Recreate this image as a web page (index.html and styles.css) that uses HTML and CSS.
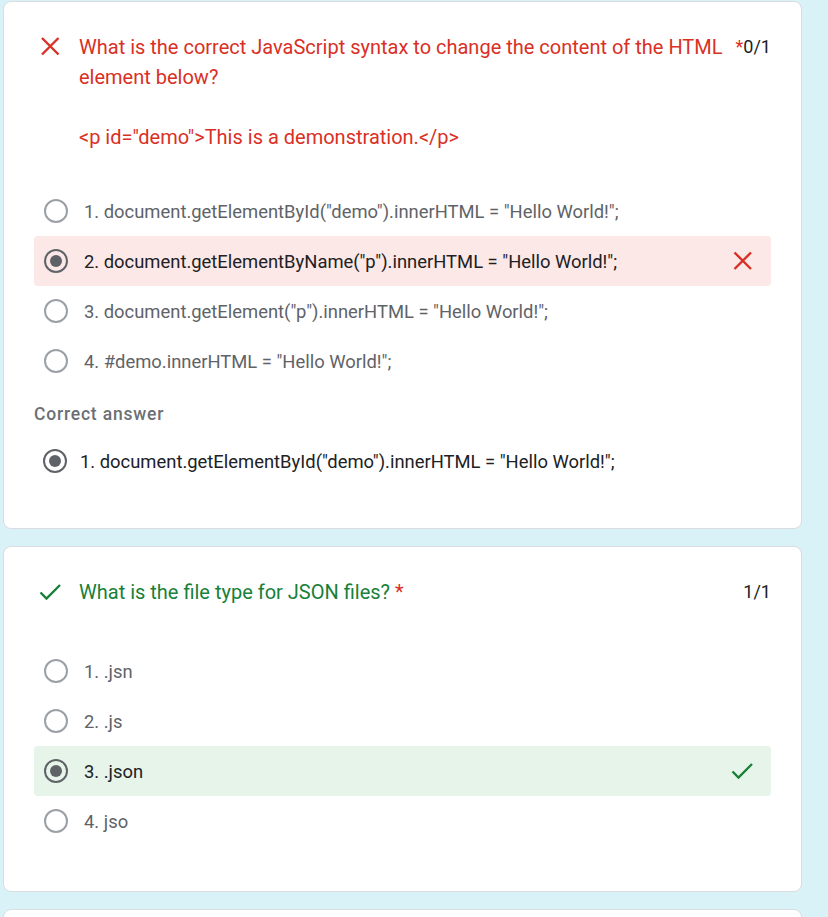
FILE: index.html
```html
<!DOCTYPE html>
<html>
<head>
<meta charset="utf-8">
<link rel="stylesheet" href="styles.css">
</head>
<body>
<div class="page">
  <section class="card card-wrong">
    <div class="q-head">
      <div class="q-icon">
        <svg width="24" height="24" viewBox="0 0 24 24"><path d="M3 3 L19.5 19.5 M19.5 3 L3 19.5" stroke="#d93025" stroke-width="2.4" fill="none"/></svg>
      </div>
      <div class="q-title red">What is the correct JavaScript syntax to change the content of the HTML element below?<br><br>&lt;p id="demo"&gt;This is a demonstration.&lt;/p&gt;</div>
      <div class="q-score"><span class="req">*</span>0/1</div>
    </div>
    <div class="options first-options">
      <div class="opt"><span class="radio"></span><span class="opt-text">1. document.getElementById("demo").innerHTML = "Hello World!";</span></div>
      <div class="opt opt-wrong"><span class="radio checked"></span><span class="opt-text">2. document.getElementByName("p").innerHTML = "Hello World!";</span>
        <svg class="mark" width="24" height="24" viewBox="0 0 24 24"><path d="M3.5 3.5 L20 20 M20 3.5 L3.5 20" stroke="#d93025" stroke-width="2.4" fill="none"/></svg>
      </div>
      <div class="opt"><span class="radio"></span><span class="opt-text">3. document.getElement("p").innerHTML = "Hello World!";</span></div>
      <div class="opt"><span class="radio"></span><span class="opt-text">4. #demo.innerHTML = "Hello World!";</span></div>
    </div>
    <div class="correct-label">Correct answer</div>
    <div class="correct-opt"><span class="radio checked"></span><span class="opt-text sel">1. document.getElementById("demo").innerHTML = "Hello World!";</span></div>
  </section>

  <section class="card card-right">
    <div class="q-head">
      <div class="q-icon">
        <svg width="24" height="24" viewBox="0 0 24 24"><path d="M1.5 12.5 L7.5 18.5 L21 5" stroke="#188038" stroke-width="2.4" fill="none"/></svg>
      </div>
      <div class="q-title green">What is the file type for JSON files? <span class="req">*</span></div>
      <div class="q-score">1/1</div>
    </div>
    <div class="options second-options">
      <div class="opt"><span class="radio"></span><span class="opt-text">1. .jsn</span></div>
      <div class="opt"><span class="radio"></span><span class="opt-text">2. .js</span></div>
      <div class="opt opt-right"><span class="radio checked"></span><span class="opt-text">3. .json</span>
        <svg class="mark" width="24" height="24" viewBox="0 0 24 24"><path d="M1.5 12.5 L7.5 18.5 L21 5" stroke="#188038" stroke-width="2.4" fill="none"/></svg>
      </div>
      <div class="opt"><span class="radio"></span><span class="opt-text">4. jso</span></div>
    </div>
  </section>

  <section class="card card-next"></section>
</div>
</body>
</html>
```

FILE: styles.css
```css
html, body {
  margin: 0;
  padding: 0;
  background: #d9f2f8;
}
body {
  font-family: Roboto, "Liberation Sans", Arial, sans-serif;
  color: #202124;
  overflow: hidden;
}
.page {
  padding: 1px 26px 0 3px;
  display: flex;
  flex-direction: column;
  gap: 17px;
}
.card {
  background: #fff;
  border: 1px solid #dadce0;
  border-radius: 8px;
  padding: 30px 30px 42px 30px;
}
.card-right {
  padding-bottom: 45px;
}
.card-next {
  height: 40px;
  padding: 0;
}
.q-head {
  display: flex;
  align-items: flex-start;
}
.q-icon {
  width: 45px;
  flex: none;
  padding-top: 3px;
  padding-left: 5px;
  box-sizing: border-box;
  height: 30px;
}
.q-icon svg { display: block; }
.q-title {
  flex: 1;
  font-size: 20px;
  line-height: 30px;
}
.red { color: #d93025; }
.green { color: #188038; }
.req { color: #d93025; }
.q-score {
  font-size: 18px;
  line-height: 30px;
  color: #202124;
  margin-left: 8px;
  flex: none;
}
.options {
  display: flex;
  flex-direction: column;
}
.first-options { margin-top: 34px; }
.second-options { margin-top: 39px; }
.opt {
  height: 50px;
  display: flex;
  align-items: center;
  padding: 0 16px 0 10px;
  border-radius: 4px;
}
.opt-wrong { background: #fce8e6; }
.opt-right { background: #e6f4ea; }
.radio {
  width: 20px;
  height: 20px;
  border: 2px solid #9aa0a6;
  border-radius: 50%;
  flex: none;
  position: relative;
  box-sizing: content-box;
}
.radio.checked {
  border-color: #5f6368;
}
.radio.checked::after {
  content: "";
  position: absolute;
  left: 4px;
  top: 4px;
  width: 12px;
  height: 12px;
  border-radius: 50%;
  background: #5f6368;
}
.opt-text {
  margin-left: 16px;
  font-size: 18.4px;
  color: #5f6368;
  flex: 1;
}
.opt-wrong .opt-text, .opt-right .opt-text, .opt-text.sel {
  color: #202124;
}
.mark { flex: none; display: block; }
.correct-label {
  margin-top: 16px;
  font-family: Roboto, "Open Sans", sans-serif;
  font-weight: 500;
  font-size: 17.5px;
  letter-spacing: 0.8px;
  line-height: 24px;
  color: #6b6f74;
}
.correct-opt {
  margin-top: 10px;
  height: 50px;
  display: flex;
  align-items: center;
  padding-left: 9px;
}
.correct-opt .opt-text {
  margin-left: 13px;
}
```
